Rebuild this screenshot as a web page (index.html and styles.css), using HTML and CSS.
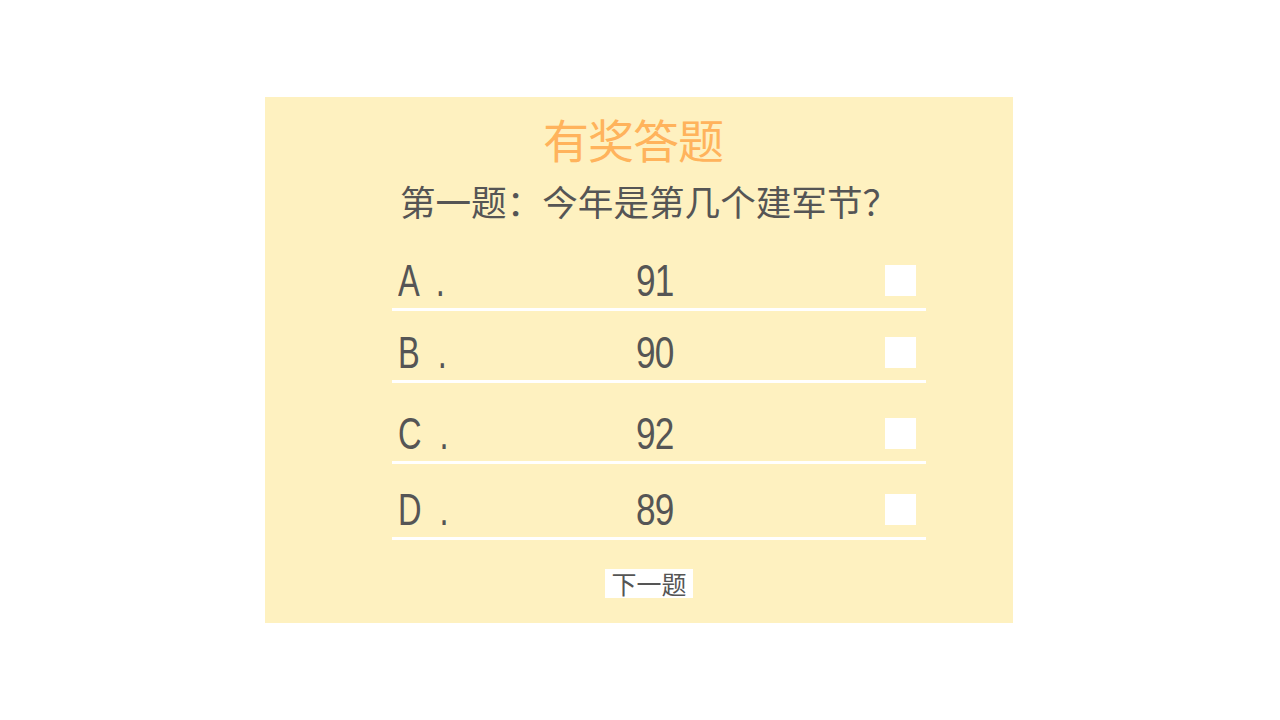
FILE: index.html
```html
<!DOCTYPE html>
<html lang="zh-CN">
<head>
<meta charset="utf-8">
<title>有奖答题</title>
<link rel="stylesheet" href="styles.css">
</head>
<body>
<div class="card">
  <h1 class="title">有奖答题</h1>
  <p class="question">第一题：今年是第几个建军节？</p>
  <ul class="options">
    <li class="option option-a"><span class="label"><span class="glyphs">A .</span></span><span class="value"><span class="glyphs">91</span></span><span class="check"></span></li>
    <li class="option option-b"><span class="label"><span class="glyphs">B .</span></span><span class="value"><span class="glyphs">90</span></span><span class="check"></span></li>
    <li class="option option-c"><span class="label"><span class="glyphs">C .</span></span><span class="value"><span class="glyphs">92</span></span><span class="check"></span></li>
    <li class="option option-d"><span class="label"><span class="glyphs">D .</span></span><span class="value"><span class="glyphs">89</span></span><span class="check"></span></li>
  </ul>
  <div class="actions"><button class="next">下一题</button></div>
</div>
</body>
</html>
```
FILE: styles.css
```css
html, body {
  margin: 0;
  padding: 0;
  background: #ffffff;
}
body {
  font-family: "Noto Sans CJK SC", "Noto Sans", sans-serif;
  color: #555555;
}
.card {
  width: 748px;
  height: 526px;
  box-sizing: border-box;
  margin: 97px 0 0 265px;
  background: #fef1c0;
  padding-top: 16px;
}
.title {
  margin: 0;
  padding-right: 12px;
  text-align: center;
  font-size: 46px;
  line-height: 50px;
  font-weight: 400;
  color: #ffb35c;
  letter-spacing: -1px;
}
.question {
  margin: 16px 0 0 0;
  padding-left: 20px;
  text-align: center;
  font-size: 35.6px;
  line-height: 44px;
  font-weight: 400;
  color: #555555;
}
.options {
  list-style: none;
  margin: 0 87px 0 127px;
  padding: 0;
}
.option {
  display: flex;
  align-items: flex-end;
  padding: 0 10px 12px 6px;
  border-bottom: 3px solid #ffffff;
  font-family: "Liberation Sans", "DejaVu Sans", sans-serif;
  font-size: 44px;
  line-height: 31px;
}
.option-a { margin-top: 42px; }
.option-b { margin-top: 26px; }
.option-c { margin-top: 35px; }
.option-d { margin-top: 30px; }
.glyphs {
  display: inline-block;
  transform: scaleX(0.74);
  transform-origin: left center;
  white-space: pre;
}
.label {
  width: 238px;
}
.label .glyphs {
  word-spacing: 12px;
}
.value {
  flex: 1;
}
.value .glyphs {
  transform: scaleX(0.8);
  letter-spacing: -1px;
}
.check {
  width: 31px;
  height: 31px;
  background: #ffffff;
}
.actions {
  display: flex;
  justify-content: center;
  margin-top: 29px;
  padding-left: 20px;
}
.next {
  width: 88px;
  height: 29px;
  border: none;
  margin: 0;
  padding: 0;
  background: #ffffff;
  color: #555555;
  font-family: "Noto Sans CJK SC", sans-serif;
  font-size: 25px;
  line-height: 29px;
}
```
